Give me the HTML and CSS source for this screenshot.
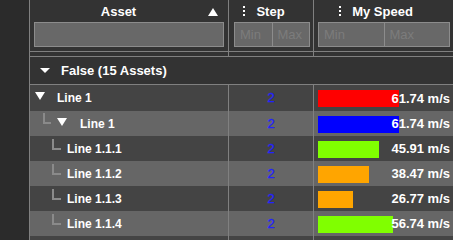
FILE: index.html
```html
<!DOCTYPE html>
<html>
<head>
  <title>Asset Speeds</title>
  <meta charset="UTF-8">
  <link rel="stylesheet" href="styles.css">
</head>
<body>
  <div class="page">
    <div class="gutter"></div>
    <div class="table">

      <!-- column headers with filters -->
      <div class="cols head">
        <div class="hcell">
          <div class="htitle">
            <span class="label">Asset</span>
            <span class="sort"></span>
          </div>
          <input class="filter" type="text">
        </div>
        <div class="hcell step-h">
          <div class="htitle menu-title">
            <svg class="menu" width="2" height="10" viewBox="0 0 2 10"><rect x="0" y="0" width="2" height="2"/><rect x="0" y="4" width="2" height="2"/><rect x="0" y="8" width="2" height="2"/></svg>
            <span>Step</span>
          </div>
          <div class="range">
            <input type="text" placeholder="Min">
            <input type="text" placeholder="Max">
          </div>
        </div>
        <div class="hcell speed-h">
          <div class="htitle menu-title">
            <svg class="menu" width="2" height="10" viewBox="0 0 2 10"><rect x="0" y="0" width="2" height="2"/><rect x="0" y="4" width="2" height="2"/><rect x="0" y="8" width="2" height="2"/></svg>
            <span>My Speed</span>
          </div>
          <div class="range">
            <input type="text" placeholder="Min">
            <input type="text" placeholder="Max">
          </div>
        </div>
      </div>

      <div class="cols spacer"><div></div><div></div><div></div></div>

      <div class="group">
        <span class="caret small"></span>
        <span>False (15 Assets)</span>
      </div>

      <div class="rows">
        <div class="cols row odd first">
          <div class="name lvl0"><span class="caret"></span><span>Line 1</span></div>
          <div class="step">2</div>
          <div class="speed"><span class="bar" style="width: 61.74%; background: #ff0000;"></span><span class="val">61.74 m/s</span></div>
        </div>
        <div class="cols row even">
          <div class="name lvl1"><span class="elbow"></span><span class="caret"></span><span>Line 1</span></div>
          <div class="step">2</div>
          <div class="speed"><span class="bar" style="width: 61.74%; background: #0000ff;"></span><span class="val">61.74 m/s</span></div>
        </div>
        <div class="cols row odd">
          <div class="name lvl2"><span class="elbow"></span><span>Line 1.1.1</span></div>
          <div class="step">2</div>
          <div class="speed"><span class="bar" style="width: 45.91%; background: #80ff00;"></span><span class="val">45.91 m/s</span></div>
        </div>
        <div class="cols row even">
          <div class="name lvl2"><span class="elbow"></span><span>Line 1.1.2</span></div>
          <div class="step">2</div>
          <div class="speed"><span class="bar" style="width: 38.47%; background: #ffa500;"></span><span class="val">38.47 m/s</span></div>
        </div>
        <div class="cols row odd">
          <div class="name lvl2"><span class="elbow"></span><span>Line 1.1.3</span></div>
          <div class="step">2</div>
          <div class="speed"><span class="bar" style="width: 26.77%; background: #ffa500;"></span><span class="val">26.77 m/s</span></div>
        </div>
        <div class="cols row even">
          <div class="name lvl2"><span class="elbow"></span><span>Line 1.1.4</span></div>
          <div class="step">2</div>
          <div class="speed"><span class="bar" style="width: 56.74%; background: #80ff00;"></span><span class="val">56.74 m/s</span></div>
        </div>
        <div class="cols row odd">
          <div class="name lvl2"></div>
          <div class="step"></div>
          <div class="speed"></div>
        </div>
      </div>

    </div>
  </div>
</body>
</html>
```

FILE: styles.css
```css
body {
  margin: 0;
  background-color: #2b2b2b;
  font-family: "Liberation Sans", Arial, sans-serif;
  color: #fff;
  overflow: hidden;
}

.page {
  display: flex;
  height: 240px;
  overflow: hidden;
}

.gutter {
  width: 29px;
  flex: none;
}

.table {
  flex: 1;
  min-width: 0;
  overflow: hidden;
  background-color: #333;
  border-left: 1px solid #808080;
}

.cols {
  display: grid;
  grid-template-columns: 199px 85px 1fr;
}

.cols > div {
  border-right: 1px solid #808080;
  min-width: 0;
}

.cols > div:last-child {
  border-right: none;
}

/* header */
.head {
  border-bottom: 1px solid #808080;
}

.hcell {
  padding: 2px 4px 4px;
}

.step-h {
  padding: 2px 3px 4px 5px;
}

.speed-h {
  padding: 2px 3px 4px 4px;
}

.htitle {
  display: flex;
  align-items: center;
  height: 18px;
  margin-bottom: 2px;
  font-size: 13px;
  font-weight: bold;
}

.htitle .label {
  flex: 1;
  text-align: center;
}

.sort {
  width: 0;
  height: 0;
  border-left: 5px solid transparent;
  border-right: 5px solid transparent;
  border-bottom: 8px solid #fff;
  margin: 1px 6px 0 5px;
}

.menu-title {
  justify-content: center;
  margin-right: 16px;
}

.menu {
  fill: #fff;
  margin-right: 11px;
}

.filter {
  display: block;
  box-sizing: border-box;
  width: 100%;
  height: 25px;
  margin: 0;
  background-color: #686868;
  border: 1px solid #8c8c8c;
}

.range {
  display: flex;
  height: 25px;
  box-sizing: border-box;
  border: 1px solid #8c8c8c;
  background-color: #686868;
}

.range input {
  flex: 1;
  min-width: 0;
  width: 0;
  margin: 0;
  padding: 0 0 0 5px;
  border: none;
  background: transparent;
  font-family: "Liberation Sans", Arial, sans-serif;
  font-size: 13px;
  outline: none;
}

.range input + input {
  border-left: 1px solid #8c8c8c;
}

.range input::placeholder {
  color: #7c7c7c;
}

.spacer {
  height: 4px;
  border-bottom: 1px solid #808080;
}

/* group row */
.group {
  display: flex;
  align-items: center;
  height: 27px;
  padding-left: 10px;
  border-bottom: 1px solid #808080;
  font-size: 13px;
  font-weight: bold;
}

.caret {
  flex: none;
  width: 0;
  height: 0;
  border-left: 5.5px solid transparent;
  border-right: 5.5px solid transparent;
  border-top: 8px solid #fff;
  margin-bottom: 4px;
}

.caret.small {
  border-top-width: 5px;
  margin: 0 11px 1px 0;
}

/* data rows */
.row {
  height: 25px;
}

.row.first {
  height: 26px;
}

.odd {
  background-color: #444;
}

.even {
  background-color: #666;
}

.name {
  display: flex;
  align-items: center;
  font-size: 12px;
  font-weight: bold;
  white-space: nowrap;
}

.elbow {
  flex: none;
  align-self: flex-start;
  box-sizing: border-box;
  border-left: 2px solid #8a8a8a;
  border-bottom: 2px solid #8a8a8a;
}

.lvl0 {
  padding-left: 5px;
}

.lvl0 .caret {
  margin-right: 12px;
}

.lvl1 {
  padding-left: 13px;
}

.lvl1 .elbow {
  width: 8px;
  height: 11px;
  margin: 2px 6px 0 0;
}

.lvl1 .caret {
  margin-right: 13px;
}

.lvl2 {
  padding-left: 22px;
}

.lvl2 .elbow {
  width: 9px;
  height: 11px;
  margin: 3px 6px 0 0;
}

.step {
  text-align: center;
  line-height: 25px;
  font-size: 13px;
  color: #2222ff;
  -webkit-text-stroke: 0.3px #2222ff;
}

.speed {
  display: grid;
  align-items: center;
  padding: 0 3px 0 4px;
}

.bar,
.val {
  grid-area: 1 / 1;
}

.bar {
  display: block;
  height: 17px;
  margin-top: 1px;
}

.val {
  justify-self: end;
  font-size: 13px;
  font-weight: bold;
}
```
